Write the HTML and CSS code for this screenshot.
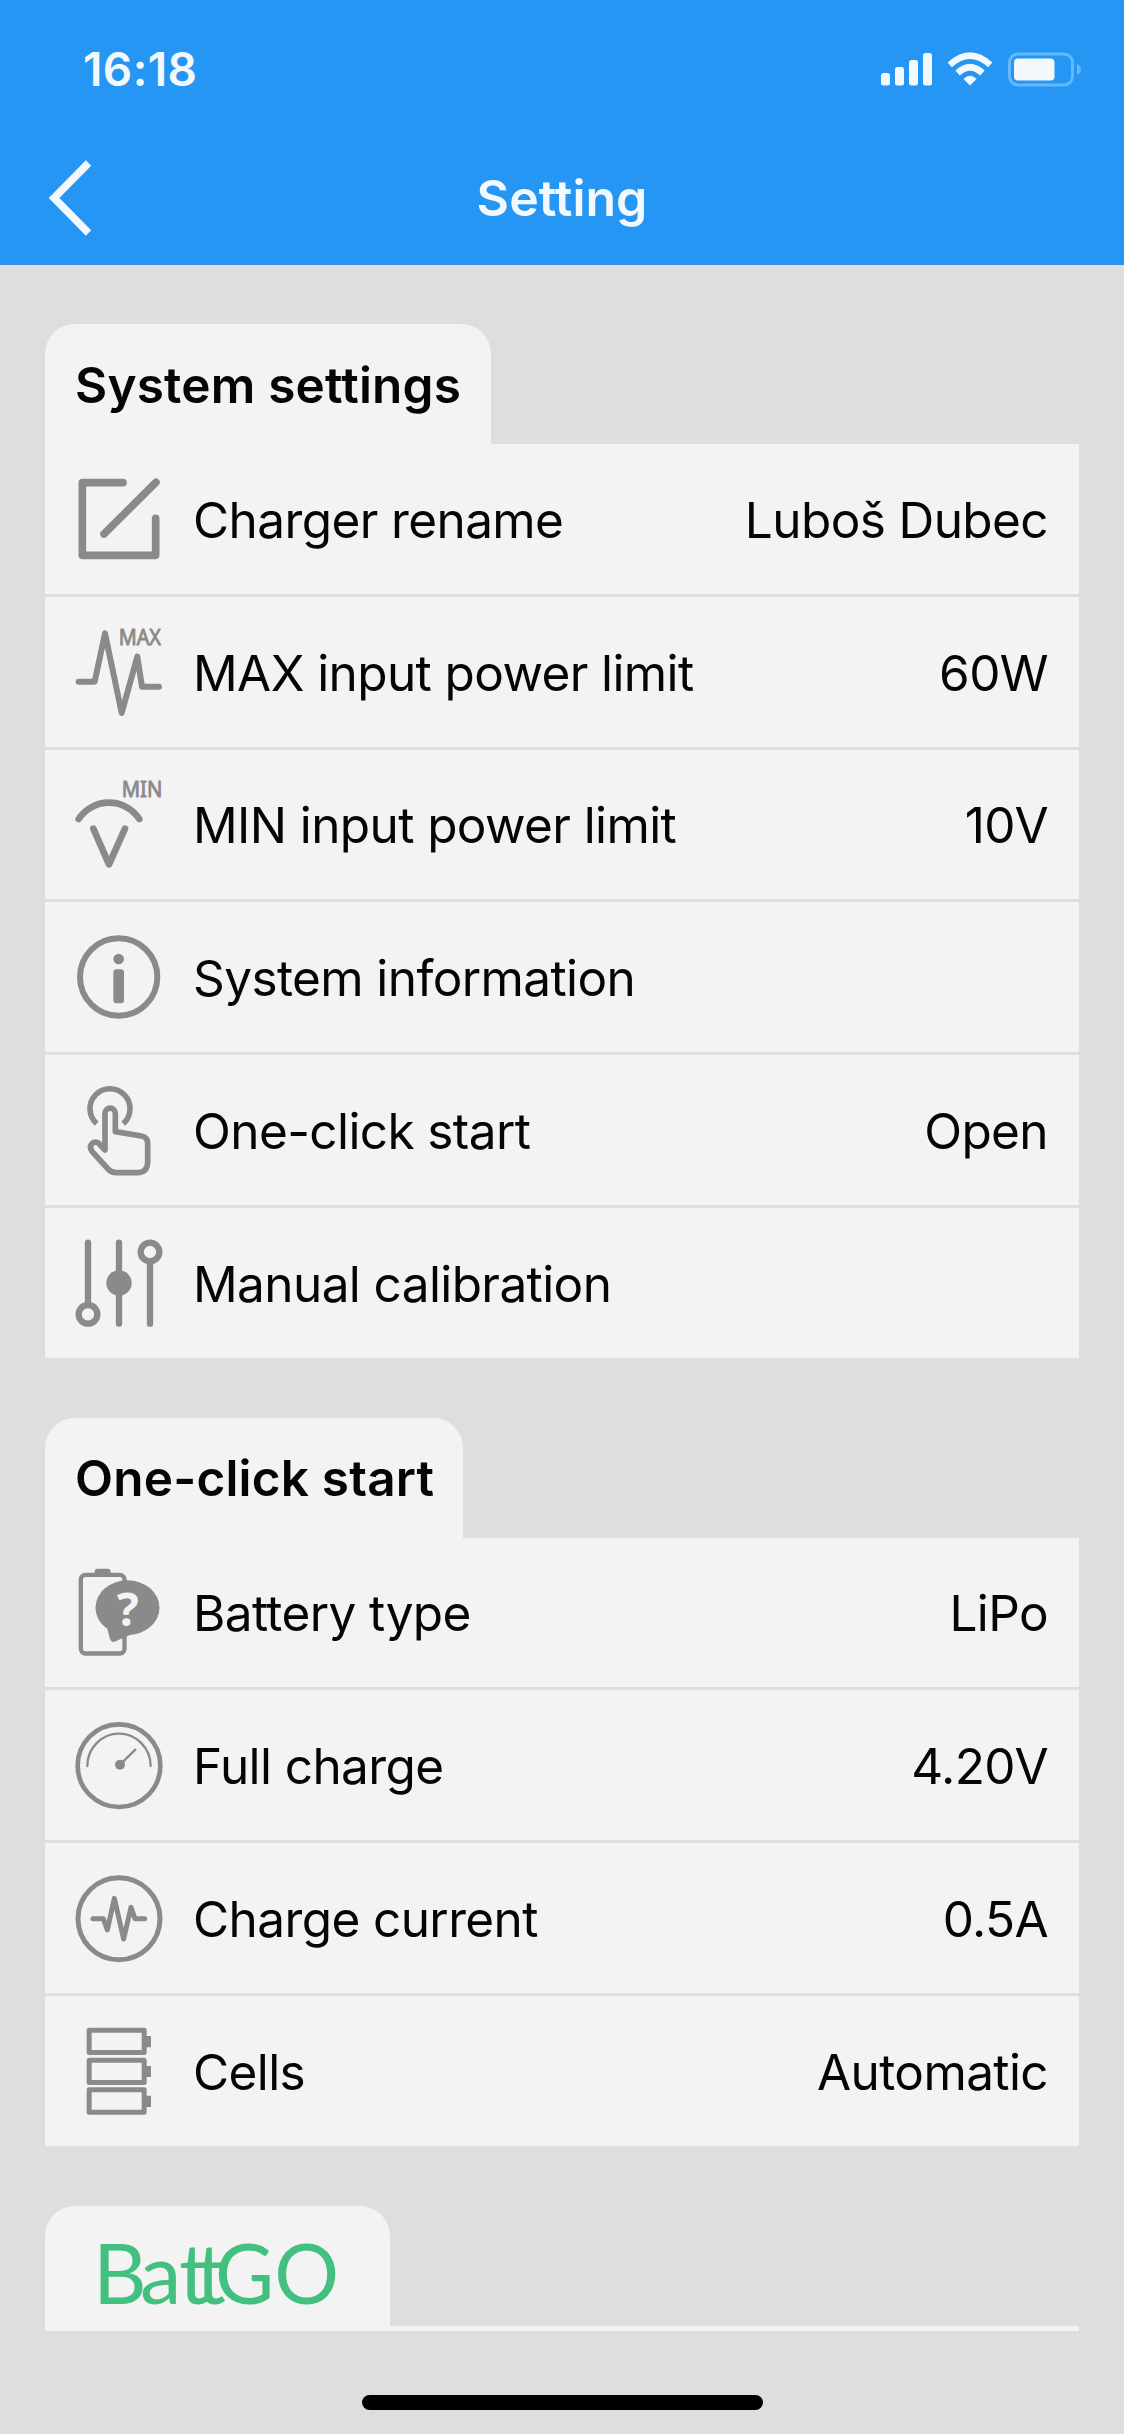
FILE: index.html
```
<!DOCTYPE html>
<html lang="en">
<head>
    <meta charset="UTF-8">
    <meta name="viewport" content="width=device-width, initial-scale=1.0">
    <title>Setting</title>
    <link rel="stylesheet" href="styles.css">
</head>
<body>
    <header class="header">
        <div class="status-bar">
            <span class="time">16:18</span>
            <svg class="status-icons" viewBox="0 0 202 36">
                <g fill="#f3f8fc">
                    <rect x="0" y="21" width="9" height="12.5" rx="2.5"/>
                    <rect x="14" y="15" width="9" height="18.5" rx="2.5"/>
                    <rect x="28" y="8" width="9" height="25.5" rx="2.5"/>
                    <rect x="42" y="1" width="9" height="32.5" rx="2.5"/>
                    <path d="M89 33.5 L82.5 27 Q89 20.5 95.5 27 Z"/>
                    <rect x="133" y="6.5" width="40.5" height="22" rx="4"/>
                </g>
                <g fill="none" stroke="#f3f8fc" stroke-width="6.5">
                    <path d="M68.8 12.8 Q89 -5.6 109.2 12.8"/>
                    <path d="M76.6 21 Q89 9.5 101.4 21"/>
                </g>
                <rect x="128.5" y="2" width="63" height="31" rx="8.5" fill="none" stroke="#65b8fb" stroke-width="3"/>
                <path d="M196 12 Q200 14 200 17.5 Q200 21 196 23 Z" fill="#65b8fb"/>
            </svg>
        </div>
        <div class="nav-bar">
            <svg class="back" viewBox="0 0 50 80">
                <path d="M43.5 5 L9 40 L43.5 75"/>
            </svg>
            <h1>Setting</h1>
        </div>
    </header>

    <main class="content">
        <section class="group">
            <h2 class="tab tab-system">System settings</h2>
            <ul class="rows">
                <li class="row">
                    <svg class="icon" viewBox="0 0 264 264" stroke-width="23">
                        <path d="M144 23 H22 V241 H242 V130 M87 177 L243 22"/>
                    </svg>
                    <span class="label">Charger rename</span>
                    <span class="value">Luboš Dubec</span>
                </li>
                <li class="row">
                    <svg class="icon" viewBox="0 0 264 264" stroke-width="18">
                        <path d="M11 161 H59 L90 16 L140 255 L187 86 L201 176 H252"/>
                        <text x="131" y="50" textLength="127" lengthAdjust="spacingAndGlyphs">MAX</text>
                    </svg>
                    <span class="label">MAX input power limit</span>
                    <span class="value">60W</span>
                </li>
                <li class="row">
                    <svg class="icon" viewBox="0 0 264 264" stroke-width="20">
                        <path d="M11 117 A109 109 0 0 1 193 117 M55 146 L102 253 L150 146"/>
                        <text x="140" y="52" textLength="122" lengthAdjust="spacingAndGlyphs">MIN</text>
                    </svg>
                    <span class="label">MIN input power limit</span>
                    <span class="value">10V</span>
                </li>
                <li class="row">
                    <svg class="icon" viewBox="0 0 264 264" stroke-width="18">
                        <circle cx="131" cy="132" r="116"/>
                        <circle class="solid" cx="131" cy="78" r="16"/>
                        <rect class="solid" x="115" y="109" width="32" height="102" rx="10"/>
                    </svg>
                    <span class="label">System information</span>
                </li>
                <li class="row">
                    <svg class="icon butt" viewBox="0 0 264 264" stroke-width="17">
                        <path d="M65 113 A60 60 0 1 1 145 113"/>
                        <path d="M90 192 V82 A15.5 15.5 0 0 1 121 82 V137 L199 150 Q218 154 218 172 V230 Q216 260 188 260 H124 Q109 260 99 249 L51 196 C39 179 54 163 70 171 Z"/>
                    </svg>
                    <span class="label">One-click start</span>
                    <span class="value">Open</span>
                </li>
                <li class="row">
                    <svg class="icon" viewBox="0 0 264 264" stroke-width="19">
                        <path d="M39 11 V196 M132 11 V254 M225 69 V254"/>
                        <circle cx="39" cy="226" r="28"/>
                        <circle class="solid" cx="132" cy="132" r="38"/>
                        <circle cx="225" cy="39" r="28"/>
                    </svg>
                    <span class="label">Manual calibration</span>
                </li>
            </ul>
        </section>

        <section class="group">
            <h2 class="tab tab-start">One-click start</h2>
            <ul class="rows">
                <li class="row">
                    <svg class="icon" viewBox="0 0 264 264" stroke-width="13">
                        <rect x="17.5" y="20.5" width="131" height="236" rx="14"/>
                        <rect class="solid" x="59" y="2" width="48" height="22" rx="9"/>
                        <ellipse class="solid" cx="157.5" cy="119" rx="96" ry="82"/>
                        <path class="solid" d="M88 160 Q97 174 99 190 L105 213 Q108 224 118 221 L170 199 Z"/>
                        <text class="question" x="158" y="174">?</text>
                    </svg>
                    <span class="label">Battery type</span>
                    <span class="value">LiPo</span>
                </li>
                <li class="row">
                    <svg class="icon" viewBox="0 0 264 264" stroke-width="7">
                        <circle cx="132" cy="134" r="124" stroke-width="14"/>
                        <path d="M37 135 A95 97 0 0 1 227 135 M135 131 L181 86"/>
                        <circle class="solid" cx="135" cy="131" r="15"/>
                    </svg>
                    <span class="label">Full charge</span>
                    <span class="value">4.20V</span>
                </li>
                <li class="row">
                    <svg class="icon" viewBox="0 0 264 264" stroke-width="15">
                        <circle cx="132" cy="134" r="123"/>
                        <path d="M54 134 H85 L97 168 L118 73 L146 195 L168 100 L180 134 H209"/>
                    </svg>
                    <span class="label">Charge current</span>
                    <span class="value">0.5A</span>
                </li>
                <li class="row">
                    <svg class="icon" viewBox="0 0 264 264" stroke-width="15">
                        <rect x="42.5" y="9.5" width="165" height="67"/>
                        <rect x="42.5" y="99.5" width="165" height="67"/>
                        <rect x="42.5" y="188.5" width="165" height="67"/>
                        <path class="solid" d="M208 27 h20 v34 h-20 Z M208 117 h20 v33 h-20 Z M208 206 h20 v34 h-20 Z"/>
                    </svg>
                    <span class="label">Cells</span>
                    <span class="value">Automatic</span>
                </li>
            </ul>
        </section>

        <section class="group">
            <h2 class="tab tab-battgo">
                <svg class="logo" viewBox="0 0 240 64">
                    <text x="-6 41 80 97" y="61">Batt</text>
                    <text class="wide" x="116" y="61" textLength="124" lengthAdjust="spacingAndGlyphs">GO</text>
                </svg>
            </h2>
            <div class="rows rows-empty"></div>
        </section>
    </main>

    <div class="home-indicator"></div>
</body>
</html>
```

FILE: styles.css
```
* {
    box-sizing: border-box;
}

body {
    font-family: Inter, "Liberation Sans", sans-serif;
    background-color: #dedede;
    color: #050505;
    margin: 0;
    height: 2434px;
    position: relative;
    overflow: hidden;
}

h1, h2, ul {
    margin: 0;
    padding: 0;
    list-style: none;
}

.header {
    height: 265px;
    background: #2696f4;
    color: #f3f8fc;
    border-bottom: 2px solid #3a90dc;
}

.status-bar {
    display: flex;
    justify-content: space-between;
    height: 132px;
    padding: 42px 41px 0 83px;
}

.time {
    font-size: 46px;
    line-height: 54px;
    font-weight: 600;
    letter-spacing: 0.4px;
}

.status-icons {
    width: 202px;
    height: 36px;
    margin-top: 10px;
}

.nav-bar {
    display: grid;
    grid-template-columns: 95px 1fr 95px;
    align-items: center;
    height: 131px;
}

.back {
    width: 50px;
    height: 80px;
    margin-left: 45px;
    fill: none;
    stroke: #f3f8fc;
    stroke-width: 7.5;
}

h1 {
    font-size: 50px;
    line-height: 60px;
    font-weight: 600;
    text-align: center;
}

.content {
    display: flex;
    flex-direction: column;
    gap: 60px;
    padding: 59px 45px 0;
}

.tab {
    display: flex;
    align-items: center;
    height: 120px;
    padding: 1px 0 0 30px;
    background: #f3f3f3;
    border-radius: 30px 30px 0 0;
    font-size: 49.5px;
    font-weight: 600;
    letter-spacing: 0.2px;
    white-space: nowrap;
}

.tab-system {
    width: 446.4px;
}

.tab-start {
    width: 418.4px;
}

.tab-battgo {
    width: 345px;
    padding: 19px 0 0 54px;
}

.rows {
    display: flex;
    flex-direction: column;
    gap: 3px;
}

.row {
    display: flex;
    align-items: center;
    height: 149.75px;
    padding: 0 31px 0 30px;
    background: #f3f3f3;
    font-size: 49.5px;
    letter-spacing: -0.6px;
    white-space: nowrap;
}

.rows-empty {
    height: 5px;
    background: #f3f3f3;
}

.icon {
    width: 88px;
    height: 88px;
    margin-right: 30px;
    overflow: visible;
    fill: none;
    stroke: #8a8a8a;
    stroke-linecap: round;
    stroke-linejoin: round;
}

.icon.butt {
    stroke-linecap: butt;
}

.icon .solid {
    fill: #8a8a8a;
    stroke: none;
}

.icon text {
    font-family: "Noto Sans", sans-serif;
    font-size: 64px;
    letter-spacing: 0;
    fill: #8a8a8a;
    stroke-width: 2.5;
}

.icon .question {
    font-size: 138px;
    font-weight: 700;
    fill: #f3f3f3;
    stroke: none;
    text-anchor: middle;
}

.label,
.value {
    padding-top: 2px;
}

.value {
    margin-left: auto;
}

.logo {
    width: 240px;
    height: 64px;
    overflow: visible;
}

.logo text {
    font-family: Lato, sans-serif;
    font-size: 83px;
    font-weight: 400;
    letter-spacing: 0;
    fill: #43c07f;
}

.home-indicator {
    position: absolute;
    left: 362px;
    bottom: 24px;
    width: 401px;
    height: 15px;
    border-radius: 8px;
    background: #000;
}
```
